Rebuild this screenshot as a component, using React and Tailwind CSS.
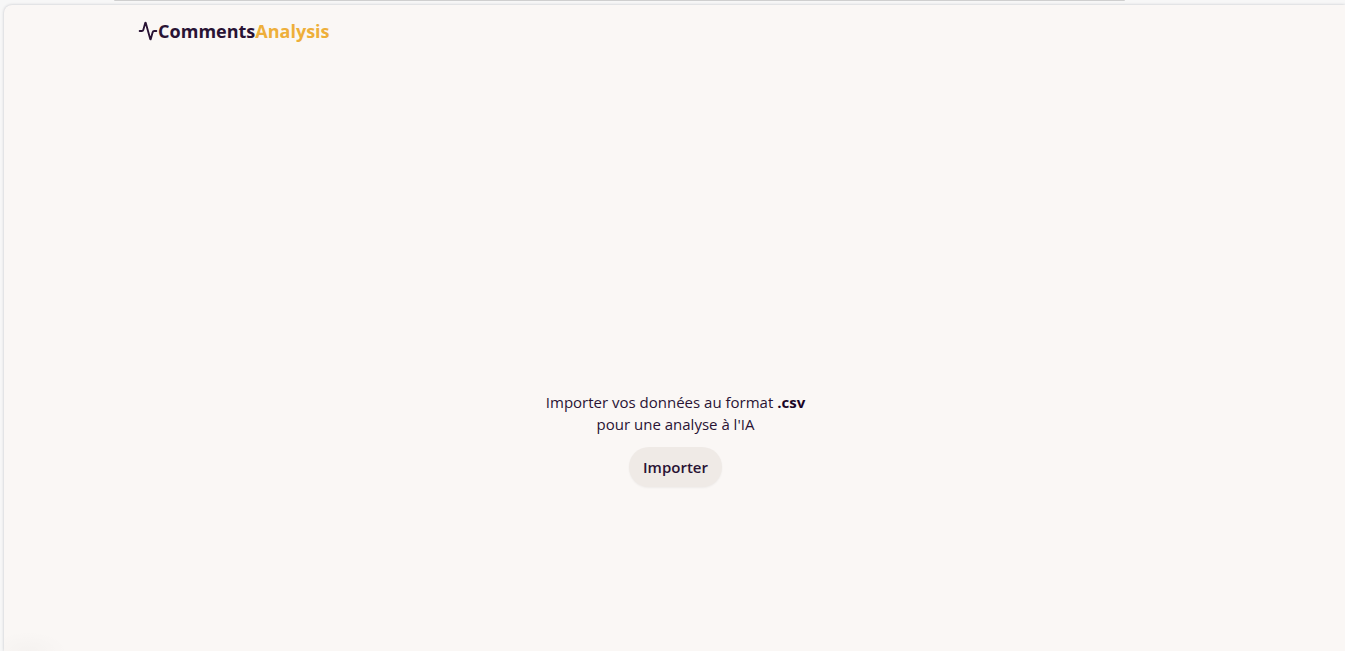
import React from "react";
import { Activity } from "lucide-react";

function Brand() {
  return (
    <a href="#" className="inline-flex items-center text-[18px] leading-6 font-bold text-[#291334]">
      <Activity className="size-5" strokeWidth={2.25} aria-hidden="true" />
      <span>
        Comments<span className="text-[#eeaf3a]">Analysis</span>
      </span>
    </a>
  );
}

export default function App() {
  return (
    <div className="flex min-h-screen flex-col bg-[#f7f7f7] pl-1 font-['Open_Sans','Noto_Sans',sans-serif]">
      <div className="mr-[220px] ml-[110px] h-px rounded-b-sm bg-[#cfcfcf]" />
      <div className="relative mt-1 flex grow flex-col overflow-hidden rounded-tl-lg bg-[#faf7f5] text-[#291334] shadow-[0_0_3px_rgba(30,41,59,0.25)]">
        <header className="px-[10%] pt-3.5">
          <Brand />
        </header>
        <main className="flex grow flex-col items-center pt-[344px] pl-0.5">
          <p className="text-center text-[15px] leading-[22px]">
            Importer vos données au format <b className="text-[#1a0526]">.csv</b>
            <br />
            pour une analyse à l'IA
          </p>
          <button type="button" className="mt-3 h-10 rounded-full bg-[#efeae6] px-3.5 text-[15px] font-semibold shadow-xs">
            Importer
          </button>
        </main>
        <div
          aria-hidden="true"
          className="pointer-events-none absolute -bottom-5 -left-4 h-10 w-20 bg-[radial-gradient(closest-side,rgba(0,0,0,0.02),transparent)]"
        />
      </div>
    </div>
  );
}
